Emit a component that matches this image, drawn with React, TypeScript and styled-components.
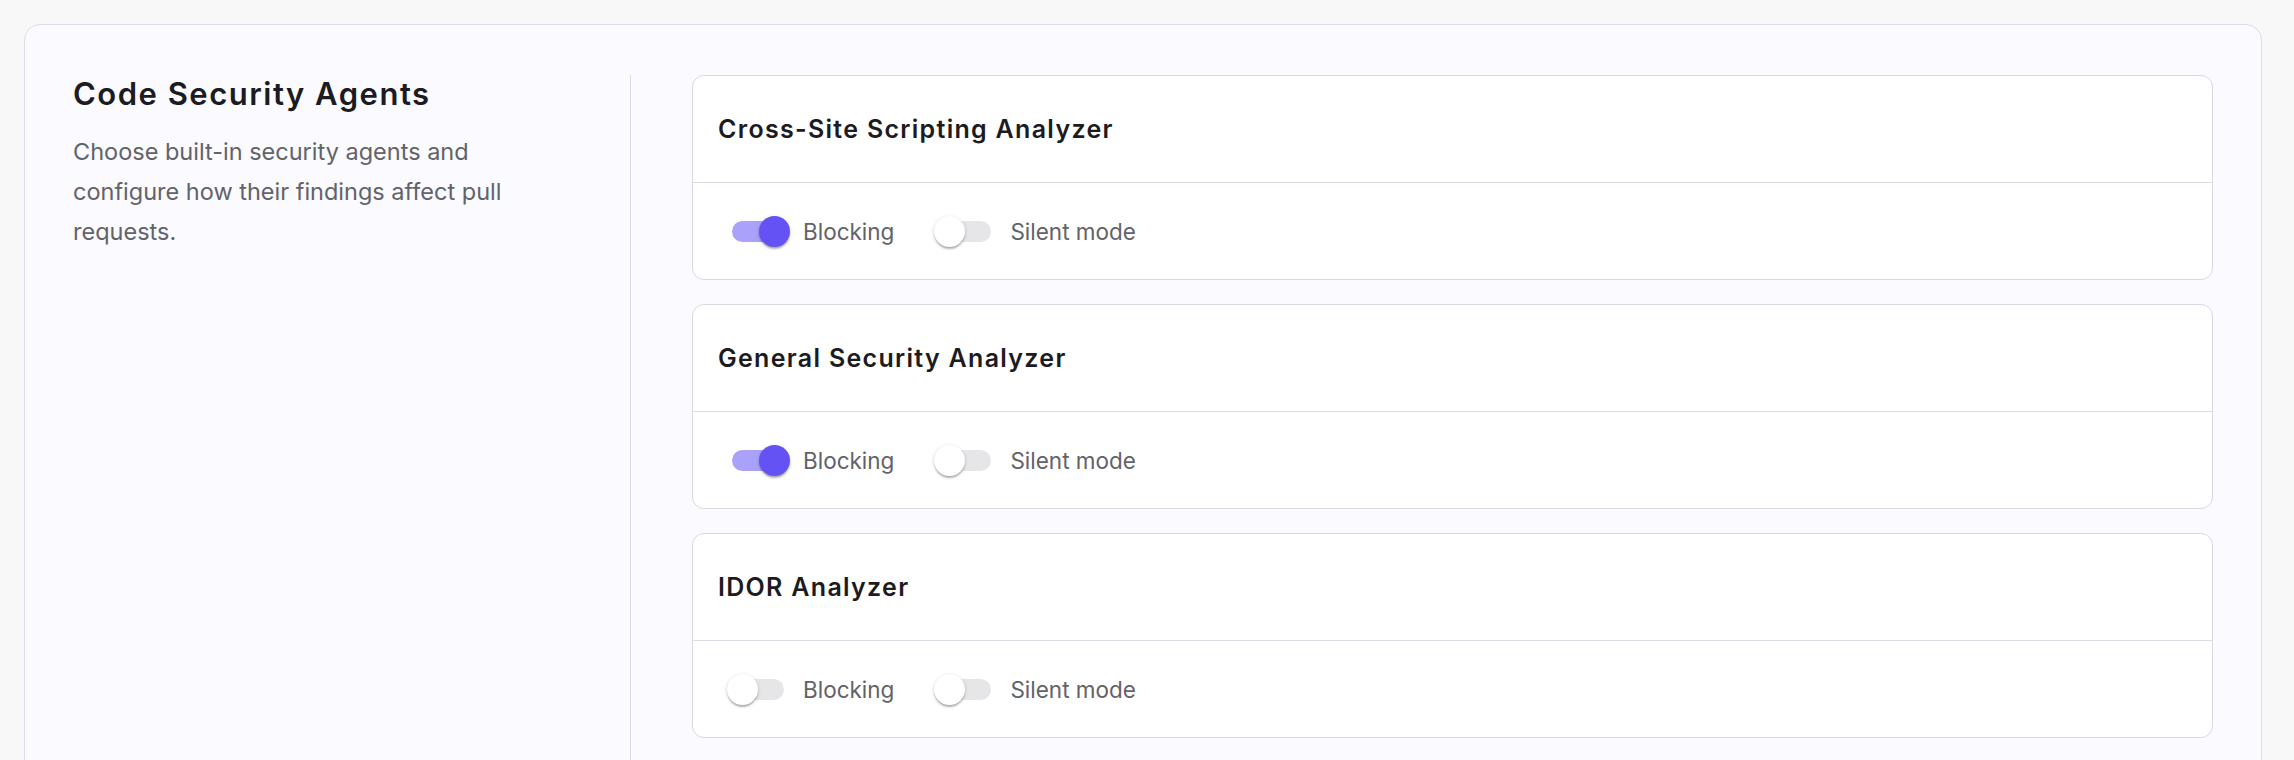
import styled, { createGlobalStyle } from "styled-components";

const GlobalStyle = createGlobalStyle`
    body {
        margin: 0;
        background: #f8f8f9;
        font-family: Inter, "Noto Sans", sans-serif;
    }
`

const Page = styled.div`
    padding: 24px 32px 0 24px;
    height: 760px;
    overflow: hidden;
    box-sizing: border-box;
`

const SettingsCard = styled.section`
    display: grid;
    grid-template-columns: 558px 1fr;
    padding: 50px 48px 48px 48px;
    border: 1px solid #dedcea;
    border-radius: 16px;
    background: #fafaff;
`

const InfoColumn = styled.div`
    border-right: 1px solid #dcdae8;
`

const Title = styled.h2`
    margin: 0;
    font-size: 31px;
    line-height: 38px;
    font-weight: 600;
    color: #1c1b22;
    letter-spacing: 1.5px;
`

const Description = styled.p`
    margin: 19px 0 0;
    max-width: 470px;
    font-size: 23.5px;
    line-height: 40px;
    color: #626269;
`

const AgentList = styled.div`
    display: flex;
    flex-direction: column;
    gap: 24px;
    padding: 0 0 80px 61px;
`

const AgentCard = styled.div`
    border: 1px solid #d9d7e8;
    border-radius: 12px;
    background: #ffffff;
`

const AgentHeader = styled.div`
    height: 106px;
    display: flex;
    align-items: center;
    padding: 0 25px;
    border-bottom: 1px solid #dcdae8;
`

const AgentName = styled.h3`
    margin: 0;
    font-size: 25px;
    font-weight: 600;
    color: #1c1b22;
    letter-spacing: 1.3px;
`

const ToggleRow = styled.div`
    height: 96px;
    display: flex;
    align-items: center;
    gap: 45px;
    padding-left: 39px;
`

const ToggleItem = styled.label`
    display: flex;
    align-items: center;
    gap: 19px;
    cursor: pointer;
`

const Track = styled.span<{ $on: boolean }>`
    position: relative;
    display: block;
    width: 52px;
    height: 21px;
    border-radius: 11px;
    background: ${props => props.$on ? "#a9a1fa" : "#e6e6e8"};
`

const Thumb = styled.span<{ $on: boolean }>`
    position: absolute;
    top: -5px;
    left: ${props => props.$on ? "27px" : "-5px"};
    width: 31px;
    height: 31px;
    border-radius: 50%;
    background: ${props => props.$on ? "#6552f5" : "#ffffff"};
    box-shadow: 0 3px 2px -1px rgba(0, 0, 0, 0.2), 0 1px 2px rgba(0, 0, 0, 0.14), 0 1px 4px rgba(0, 0, 0, 0.12);
`

const ToggleLabel = styled.span`
    font-size: 22.5px;
    color: #626269;
`

const Toggle = ({ on, label }: { on: boolean; label: string }) => (
    <ToggleItem>
        <Track $on={on}>
            <Thumb $on={on} />
        </Track>
        <ToggleLabel>{label}</ToggleLabel>
    </ToggleItem>
)

const AGENTS = [
    { name: "Cross-Site Scripting Analyzer", blocking: true, silent: false },
    { name: "General Security Analyzer", blocking: true, silent: false },
    { name: "IDOR Analyzer", blocking: false, silent: false },
]

export default function App() {
    return (
        <>
            <GlobalStyle />
            <Page>
                <SettingsCard>
                    <InfoColumn>
                        <Title>Code Security Agents</Title>
                        <Description>
                            Choose built-in security agents and configure how their findings affect pull requests.
                        </Description>
                    </InfoColumn>
                    <AgentList>
                        {AGENTS.map((agent) => (
                            <AgentCard key={agent.name}>
                                <AgentHeader>
                                    <AgentName>{agent.name}</AgentName>
                                </AgentHeader>
                                <ToggleRow>
                                    <Toggle on={agent.blocking} label="Blocking" />
                                    <Toggle on={agent.silent} label="Silent mode" />
                                </ToggleRow>
                            </AgentCard>
                        ))}
                    </AgentList>
                </SettingsCard>
            </Page>
        </>
    )
}
